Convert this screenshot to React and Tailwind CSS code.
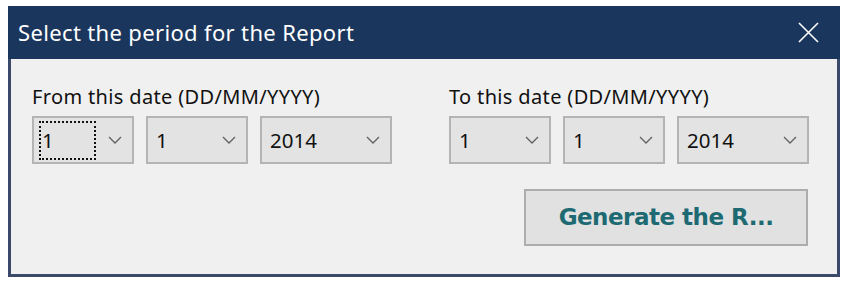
import React from "react";

function Chevron() {
  return (
    <svg width="14" height="8" viewBox="0 0 14 8" className="shrink-0">
      <polyline points="1,1 7,7 13,1" fill="none" stroke="#606060" strokeWidth="1.3" />
    </svg>
  );
}

function Combo({ value, width, focused }) {
  return (
    <div
      className={`flex h-[48px] items-center justify-between border-2 border-[#b4b4b4] bg-[#e3e3e3] pl-[5px] pr-[10px] ${width}`}
    >
      {focused ? (
        <div className="flex h-[39px] w-[57px] items-center border-2 border-dotted border-[#111] pl-[1px] text-[20.5px] text-[#111]">
          {value}
        </div>
      ) : (
        <span className="pl-[3px] text-[20.5px] text-[#111]">{value}</span>
      )}
      <Chevron />
    </div>
  );
}

function DateGroup({ label, first }) {
  return (
    <div className="flex flex-col">
      <div className="text-[20px] leading-[24px] tracking-[0.35px] text-[#111]">{label}</div>
      <div className="mt-[7px] flex gap-[12px]">
        <Combo value="1" width="w-[102px]" focused={first} />
        <Combo value="1" width="w-[102px]" />
        <Combo value="2014" width="w-[132px]" />
      </div>
    </div>
  );
}

export default function App() {
  return (
    <div
      className="h-[285px] w-[850px] bg-white pl-[8px] pt-[6px]"
      style={{ fontFamily: '"Noto Sans", "Open Sans", sans-serif' }}
    >
      <div className="flex h-[271px] w-[832px] flex-col">
        <div className="flex h-[53px] items-center justify-between bg-[#1b365d] pl-[10px] pr-[21px]">
          <span className="text-[22px] tracking-[0.35px] text-white">Select the period for the Report</span>
          <svg width="21" height="21" viewBox="0 0 21 21">
            <path d="M1 1 L20 20 M20 1 L1 20" stroke="#fff" strokeWidth="1.6" />
          </svg>
        </div>
        <div className="flex flex-1 flex-col border-x-[3px] border-b-[3px] border-[#3a4a68] bg-[#f0f0f0] pl-[21px] pr-[27px] pt-[26px]">
          <div className="flex gap-[57px]">
            <DateGroup label="From this date (DD/MM/YYYY)" first />
            <DateGroup label="To this date (DD/MM/YYYY)" />
          </div>
          <div className="mt-[25px] flex justify-end">
            <button
              className="mr-[2px] h-[57px] w-[284px] border-2 border-[#adadad] bg-[#e1e1e1] text-[23px] font-bold text-[#1d6a73]"
              style={{ fontFamily: '"DejaVu Sans", sans-serif', letterSpacing: "-0.5px" }}
            >
              Generate the R...
            </button>
          </div>
        </div>
      </div>
    </div>
  );
}
